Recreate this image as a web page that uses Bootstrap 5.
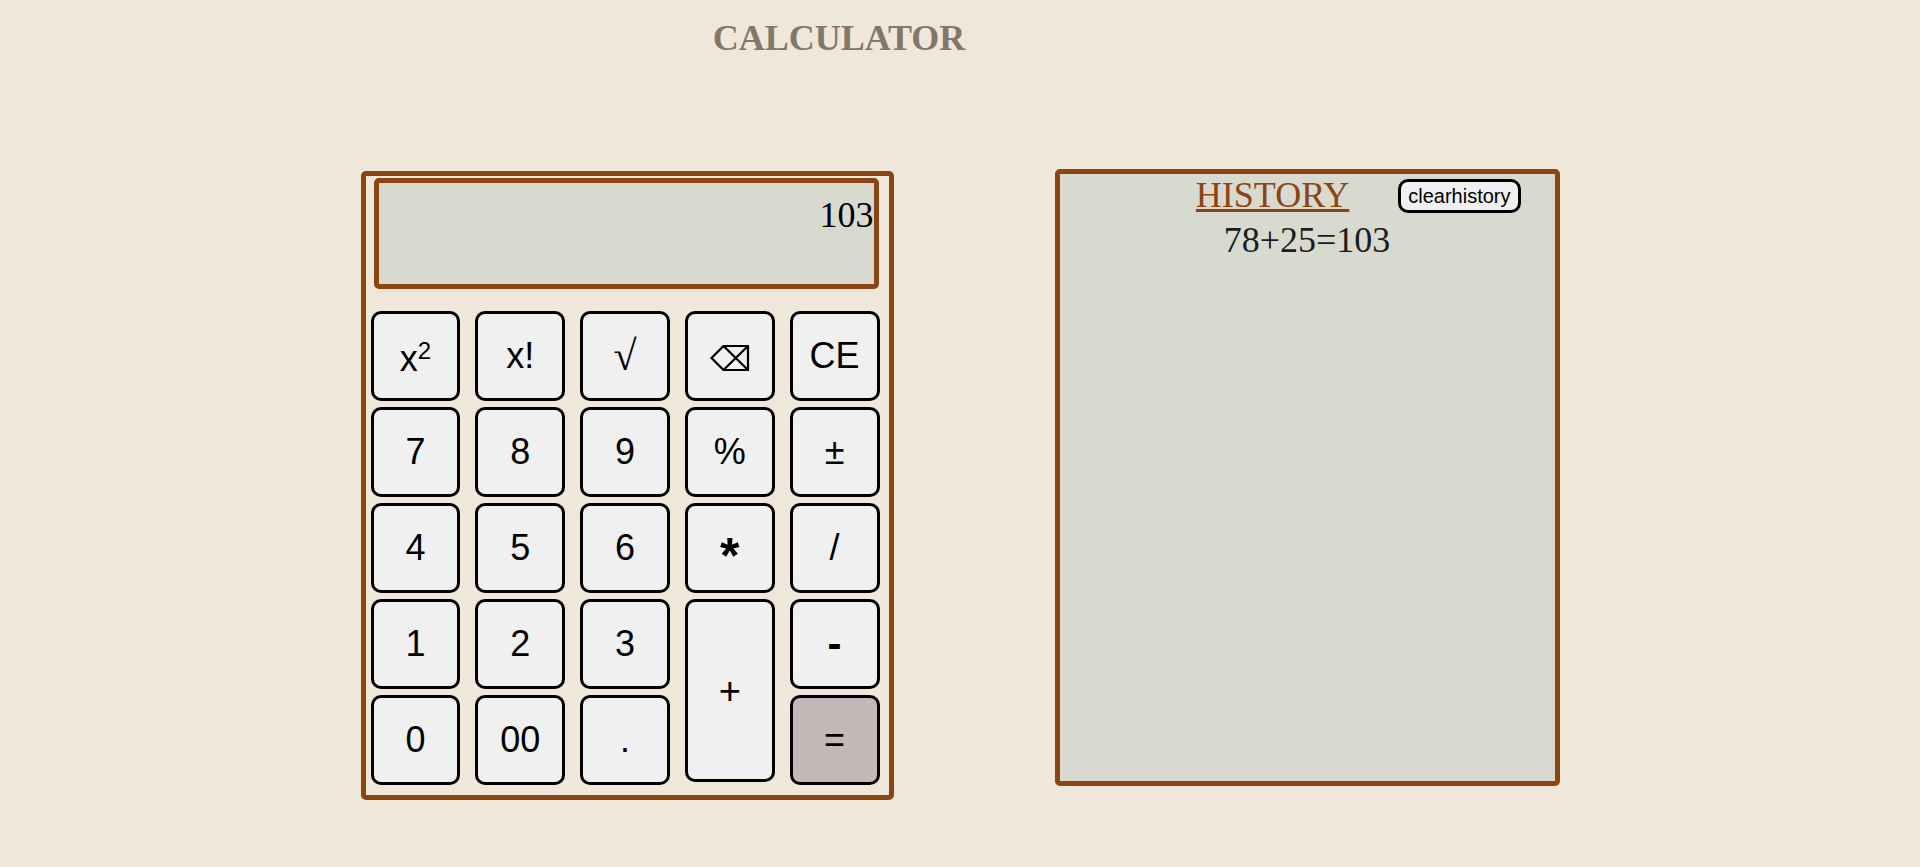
<!DOCTYPE html>
<html lang="en">
<head>
<meta charset="utf-8">
<meta name="viewport" content="width=device-width, initial-scale=1">
<title>Calculator</title>
<link href="https://cdn.jsdelivr.net/npm/bootstrap@5.3.0/dist/css/bootstrap.min.css" rel="stylesheet">
<style>
  body { background: #efe7da; color: #000; font-family: "Liberation Serif", "Times New Roman", serif; }
  .page-title { padding: 17px 242px 0 0; font-size: 36px; line-height: 42px; font-weight: 700; color: #83776a; }
  .workspace { gap: 48px 161px; padding-top: 110px; }
  .framed { border: 5px solid #8b4513; border-radius: 5px; }
  .calculator { width: 100%; max-width: 533px; margin-top: 2px; padding: 2px 9px 10px 5px; }
  .screen { margin: 0 1px 22px 3px; min-height: 111px; padding-top: 11px; background: #d8d9cf; font-size: 36px; line-height: 42px; }
  .keypad { display: grid; grid-template-columns: repeat(5, 1fr); grid-auto-rows: 90px; gap: 6px 15px; }
  .key { border: 3px solid #000; border-radius: 10px; background: #f0f0f0; color: #000; font-family: "Liberation Sans", Arial, sans-serif; font-size: 36px; line-height: 42px; padding: 0; }
  .key:hover, .key-equals { background: #c5b8b8; }
  .key sup { font-size: 24px; }
  .key-power { padding-top: 5px; }
  .key-tall { grid-row: span 2; margin-bottom: 3px; font-size: 38px; }
  .key-root { font-family: "Liberation Serif", serif; font-size: 42px; }
  .key-minus { font-size: 42px; font-weight: 700; }
  .key-times { padding-top: 16px; font-size: 50px; font-weight: 700; }
  .history { width: 100%; max-width: 505px; min-height: 617px; background: #d8d9cf; font-size: 36px; line-height: 42px; }
  .history-head { gap: 49px; padding-right: 34px; }
  .history-title { font-size: 36px; line-height: 42px; font-weight: 400; color: #8b4513; text-decoration: underline 3px; }
  .history-entry { margin-top: 3px; color: #1c1c1c; }
  .clear { margin-top: 5px; height: 34px; padding: 0 7px; font-size: 20px; line-height: 28px; }
  @media (max-width: 991px) { .page-title { padding-right: 0; } }
</style>
</head>
<body>
<h1 class="page-title text-center mb-0">CALCULATOR</h1>
<main class="workspace d-flex flex-wrap justify-content-center align-items-start">
  <section class="calculator framed" aria-label="Calculator">
    <output class="screen framed d-block text-end">103</output>
    <div class="keypad">
      <button type="button" class="key key-power">x<sup>2</sup></button>
      <button type="button" class="key">x!</button>
      <button type="button" class="key key-root">√</button>
      <button type="button" class="key" aria-label="Backspace">
        <svg width="40" height="26" viewBox="0 0 40 26" fill="none" stroke="#000" stroke-width="2.200"><path d="M1.500 13 13.500 1H38V25H13.500ZM13.500 1 38 25M38 1 13.500 25"/></svg>
      </button>
      <button type="button" class="key">CE</button>
      <button type="button" class="key">7</button>
      <button type="button" class="key">8</button>
      <button type="button" class="key">9</button>
      <button type="button" class="key">%</button>
      <button type="button" class="key">±</button>
      <button type="button" class="key">4</button>
      <button type="button" class="key">5</button>
      <button type="button" class="key">6</button>
      <button type="button" class="key key-times">*</button>
      <button type="button" class="key">/</button>
      <button type="button" class="key">1</button>
      <button type="button" class="key">2</button>
      <button type="button" class="key">3</button>
      <button type="button" class="key key-tall">+</button>
      <button type="button" class="key key-minus">-</button>
      <button type="button" class="key">0</button>
      <button type="button" class="key">00</button>
      <button type="button" class="key">.</button>
      <button type="button" class="key key-equals">=</button>
    </div>
  </section>
  <section class="history framed" aria-labelledby="history-title">
    <div class="history-head d-flex justify-content-end align-items-start">
      <h2 class="history-title mb-0" id="history-title">HISTORY</h2>
      <button type="button" class="key clear">clearhistory</button>
    </div>
    <p class="history-entry text-center mb-0">78+25=103</p>
  </section>
</main>
<script src="https://cdn.jsdelivr.net/npm/bootstrap@5.3.0/dist/js/bootstrap.bundle.min.js"></script>
</body>
</html>
